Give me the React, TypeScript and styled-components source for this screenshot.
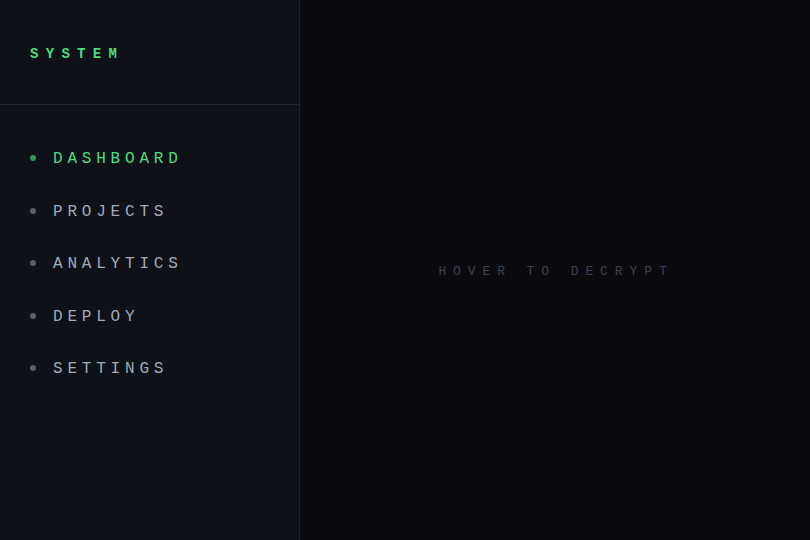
import React from "react";
import styled, { createGlobalStyle } from "styled-components";

const Global = createGlobalStyle`
  html, body { margin: 0; padding: 0; background: #0b0a0f; }
  #root { height: 540px; }
`;

const Shell = styled.div`
  display: flex;
  width: 810px;
  height: 540px;
  font-family: "Courier New", "Liberation Mono", monospace;
`;

const Sidebar = styled.aside`
  width: 299px;
  flex-shrink: 0;
  background: #0e1117;
  border-right: 1px solid #1d222c;
  display: flex;
  flex-direction: column;
`;

const Header = styled.div`
  height: 105px;
  box-sizing: border-box;
  border-bottom: 1px solid #1f2430;
  display: flex;
  align-items: center;
  padding: 4px 0 0 30px;
`;

const Brand = styled.div`
  color: #4ade80;
  font-size: 14px;
  font-weight: 700;
  letter-spacing: 7.3px;
`;

const Nav = styled.nav`
  display: flex;
  flex-direction: column;
  padding: 28px 0 0 30px;
`;

const Item = styled.div<{ $active?: boolean }>`
  display: flex;
  align-items: center;
  gap: 17px;
  height: 52.5px;
  font-size: 16px;
  letter-spacing: 4.8px;
  color: ${(p) => (p.$active ? "#4ade80" : "#a3aab8")};
`;

const Dot = styled.span<{ $active?: boolean }>`
  width: 6px;
  height: 6px;
  margin-top: -2px;
  border-radius: 50%;
  background: ${(p) => (p.$active ? "#2f9b5a" : "#5b6068")};
`;

const Main = styled.main`
  flex: 1;
  background: #0b0a0f;
  display: flex;
  align-items: center;
  justify-content: center;
  padding-top: 3px;
`;

const Hint = styled.div`
  color: #3b4252;
  font-size: 13px;
  letter-spacing: 6.9px;
  margin-left: 2px;
`;

const items = ["DASHBOARD", "PROJECTS", "ANALYTICS", "DEPLOY", "SETTINGS"];

export default function App() {
  return (
    <>
      <Global />
      <Shell>
        <Sidebar>
          <Header>
            <Brand>SYSTEM</Brand>
          </Header>
          <Nav>
            {items.map((it, i) => (
              <Item key={it} $active={i === 0}>
                <Dot $active={i === 0} />
                {it}
              </Item>
            ))}
          </Nav>
        </Sidebar>
        <Main>
          <Hint>HOVER TO DECRYPT</Hint>
        </Main>
      </Shell>
    </>
  );
}
